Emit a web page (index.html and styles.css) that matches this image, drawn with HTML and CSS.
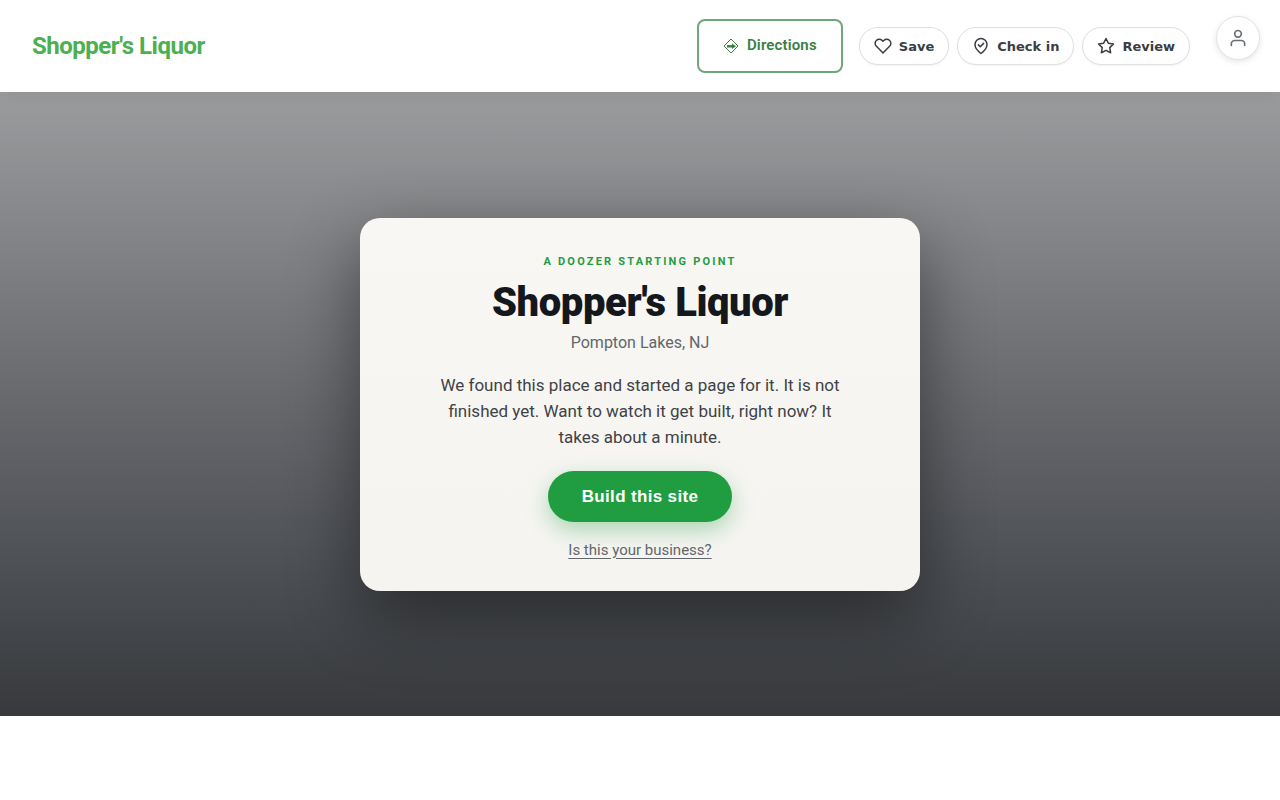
FILE: index.html
```
<!DOCTYPE html>
<html lang="en">
<head>
  <meta charset="UTF-8">
  <meta name="viewport" content="width=device-width, initial-scale=1">
  <title>Shopper's Liquor</title>
  <link rel="stylesheet" href="styles.css">
</head>
<body>

  <header class="site-header">
    <a class="logo" href="#">Shopper's Liquor</a>

    <nav class="actions">
      <a class="directions" href="#">
        <svg width="16" height="16" viewBox="0 0 16 16" fill="none" stroke="currentColor" stroke-width="1" stroke-linejoin="round">
          <path d="M8 1 15 8 8 15 1 8z"/>
          <path d="M4 8.300h6" stroke-width="2.400"/>
          <path d="M9 5.500 13 8.300 9 11z" fill="currentColor" stroke="none"/>
        </svg>
        <span>Directions</span>
      </a>
      <div class="pills">
        <button class="pill" type="button">
          <svg width="18" height="18" viewBox="0 0 24 24">
            <path d="M20.84 4.61a5.5 5.5 0 0 0-7.78 0L12 5.67l-1.060-1.060a5.500 5.500 0 0 0-7.780 7.780l1.060 1.060L12 21.230l7.780-7.780 1.060-1.060a5.500 5.500 0 0 0 0-7.780z"/>
          </svg>
          Save
        </button>
        <button class="pill" type="button">
          <svg width="18" height="18" viewBox="0 0 24 24">
            <path d="M12 22s8-6 8-12a8 8 0 0 0-16 0c0 6 8 12 8 12z"/>
            <path d="m8.500 10.500 2.500 2.500 4.500-4.500"/>
          </svg>
          Check in
        </button>
        <button class="pill" type="button">
          <svg width="18" height="18" viewBox="0 0 24 24">
            <path d="m12 2 3.090 6.260L22 9.270l-5 4.870 1.180 6.880L12 17.770l-6.180 3.250L7 14.140 2 9.270l6.910-1.010z"/>
          </svg>
          Review
        </button>
      </div>
      <button class="account" type="button" aria-label="Account">
        <svg width="20" height="20" viewBox="0 0 24 24">
          <path d="M20 21v-2a4 4 0 0 0-4-4H8a4 4 0 0 0-4 4v2"/>
          <circle cx="12" cy="7" r="4"/>
        </svg>
      </button>
    </nav>
  </header>

  <main class="hero">
    <section class="card">
      <p class="eyebrow">A Doozer starting point</p>
      <h1>Shopper's Liquor</h1>
      <p class="place">Pompton Lakes, NJ</p>
      <p class="pitch">We found this place and started a page for it. It is not finished yet. Want to watch it get built, right now? It takes about a minute.</p>
      <button class="build" type="button">Build this site</button>
      <a class="claim" href="#">Is this your business?</a>
    </section>
  </main>

</body>
</html>
```
FILE: styles.css
```
* {
  box-sizing: border-box;
}

body {
  margin: 0;
  background: #fff;
  color: #3f4247;
  font-family: Roboto, "Liberation Sans", sans-serif;
}

h1, p {
  margin: 0;
}

svg {
  flex: none;
}

.site-header {
  position: relative;
  display: flex;
  align-items: center;
  justify-content: space-between;
  min-height: 92px;
  padding: 16px 20px 16px 32px;
  background: #fff;
  box-shadow: 0 2px 20px rgba(0, 0, 0, 0.08);
}

.logo {
  color: #4caf50;
  font-size: 24px;
  font-weight: 700;
  letter-spacing: -0.02em;
  text-decoration: none;
}

.actions {
  display: flex;
  align-items: center;
  align-self: stretch;
}

.directions {
  display: flex;
  align-items: center;
  gap: 8px;
  height: 54px;
  padding: 0 24px;
  margin-right: 16px;
  border: 2px solid #6fa878;
  border-radius: 8px;
  color: #388044;
  font-size: 15px;
  font-weight: 600;
  letter-spacing: 0.01em;
  text-decoration: none;
}

.directions span {
  padding-bottom: 2px;
}

.pills {
  display: flex;
  gap: 8px;
  margin-right: 26px;
}

.pill {
  display: flex;
  align-items: center;
  gap: 7px;
  height: 38px;
  padding: 0 14px;
  border: 1px solid #dfe0e2;
  border-radius: 19px;
  background: #fff;
  box-shadow: 0 1px 2px rgba(0, 0, 0, 0.05);
  color: #3a3d42;
  font-family: "DejaVu Sans", sans-serif;
  font-size: 13px;
  font-weight: 700;
}

.pill svg,
.account svg {
  fill: none;
  stroke: currentColor;
  stroke-width: 2;
  stroke-linecap: round;
  stroke-linejoin: round;
}

.account {
  display: flex;
  align-items: center;
  justify-content: center;
  align-self: flex-start;
  width: 44px;
  height: 44px;
  padding: 0;
  border: 1px solid #e2e3e5;
  border-radius: 50%;
  background: #fff;
  box-shadow: 0 2px 6px rgba(0, 0, 0, 0.1);
  color: #6b6e73;
}

.hero {
  display: flex;
  align-items: center;
  justify-content: center;
  min-height: 78vh;
  padding: 24px;
  background: linear-gradient(#9b9c9e, #67686c 50%, #4e5156 75%, #37393c);
}

.card {
  display: flex;
  flex-direction: column;
  align-items: center;
  width: 100%;
  max-width: 560px;
  padding: 36px 40px 31px;
  border-radius: 20px;
  background: linear-gradient(#f8f7f4, #f5f4f1);
  box-shadow: 0 24px 70px rgba(0, 0, 0, 0.45);
  text-align: center;
}

.eyebrow {
  color: #1f9d40;
  font-size: 11px;
  font-weight: 700;
  line-height: 16px;
  letter-spacing: 0.2em;
  text-transform: uppercase;
}

h1 {
  margin-top: 11px;
  color: #14171b;
  font-size: 40px;
  font-weight: 900;
  line-height: 44px;
  letter-spacing: -0.01em;
}

.place {
  margin-top: 8px;
  color: #63666b;
  font-size: 16px;
  line-height: 20px;
}

.pitch {
  max-width: 420px;
  margin-top: 19px;
  font-size: 17px;
  line-height: 26px;
}

.build {
  height: 51px;
  margin-top: 21px;
  padding: 2px 34px 0;
  border: 0;
  border-radius: 26px;
  background: #1f9d40;
  box-shadow: 0 8px 22px rgba(31, 157, 64, 0.35);
  color: #fff;
  font-family: "Liberation Sans", sans-serif;
  font-size: 17px;
  font-weight: 700;
  letter-spacing: 0.02em;
}

.claim {
  margin-top: 18px;
  color: #63666b;
  font-size: 15px;
  line-height: 20px;
  text-underline-offset: 3px;
}
```
